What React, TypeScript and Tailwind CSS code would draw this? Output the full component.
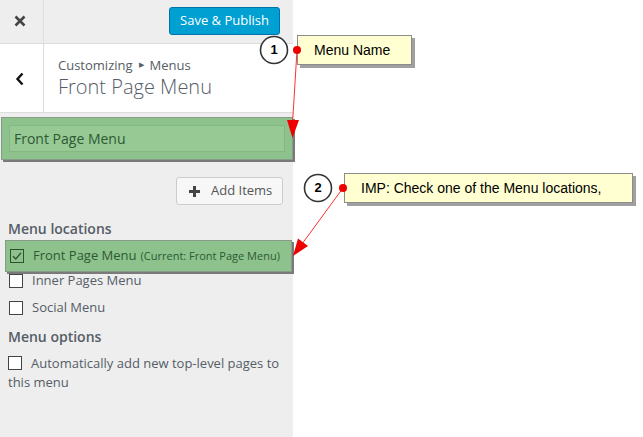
import React from "react";

function Check({ checked, green }: { checked?: boolean; green?: boolean }) {
  return (
    <span
      className={
        "flex h-[14px] w-[14px] shrink-0 items-center justify-center border " +
        (green ? "border-[#2f4f2f] bg-[#8ec28c]" : "border-[#444] bg-white")
      }
    >
      {checked && (
        <svg width="12" height="12" viewBox="0 0 12 12">
          <path d="M2 6.2 L4.8 9 L10 2.8" fill="none" stroke="#2f5a30" strokeWidth="1.4" />
        </svg>
      )}
    </span>
  );
}

export default function App() {
  return (
    <div
      className="relative flex h-[437px] w-[643px] overflow-hidden bg-white"
      style={{ fontFamily: '"Open Sans", "Liberation Sans", sans-serif' }}
    >
      <div className="flex h-full w-[293px] flex-col bg-[#eeeeee]">
        {/* top bar */}
        <div className="flex h-[44px] border-b border-[#dddddd]">
          <div className="flex w-[44px] items-center justify-center border-r border-[#dddddd]">
            <svg width="12" height="12" viewBox="0 0 12 12" className="-ml-[3px] -mt-[1px]">
              <path d="M1.5 1.5 L10.5 10.5 M10.5 1.5 L1.5 10.5" stroke="#444" strokeWidth="2.6" />
            </svg>
          </div>
          <div className="flex flex-1 justify-end pr-[13px] pt-[7px]">
            <button className="h-[28px] w-[111px] rounded-[3px] border border-[#0073aa] bg-[#00a0d2] text-[13px] text-white">
              Save &amp; Publish
            </button>
          </div>
        </div>
        {/* header */}
        <div className="flex h-[69px] border-b border-[#dddddd] bg-white">
          <div className="flex w-[44px] items-center justify-center border-r border-[#dddddd]">
            <svg width="10" height="14" viewBox="0 0 10 14" className="-ml-[3px] mt-[2px]">
              <path d="M7.5 1.5 L2.5 7 L7.5 12.5" fill="none" stroke="#111" strokeWidth="2.4" />
            </svg>
          </div>
          <div className="flex flex-col pl-[14px] pt-[12px]">
            <div className="flex items-center text-[13px] leading-[18px] text-[#555d66]">
              Customizing
              <span className="mx-[6px] text-[7px]">▶</span>
              Menus
            </div>
            <div className="text-[20px] font-light leading-[26px] text-[#555d66]">Front Page Menu</div>
          </div>
        </div>
        {/* menu name highlighted */}
        <div className="ml-[1px] mt-[4px] flex h-[43px] w-[292px] items-center border border-[#8a9a8a] bg-[#8ec28c] px-[7px] shadow-[2px_2px_0_#7a7a7a]">
          <div className="flex h-[27px] w-full items-center border border-[#84b882] bg-[#97c995] pl-[4px] text-[14px] text-[#2c5a32]">
            Front Page Menu
          </div>
        </div>
        {/* add items */}
        <div className="mt-[17px] flex justify-end pr-[10px]">
          <button className="flex h-[28px] w-[107px] items-center rounded-[3px] border border-[#cccccc] bg-[#f7f7f7] pl-[12px] text-[13px] text-[#555]">
            <svg width="11" height="11" viewBox="0 0 11 11" className="mr-[11px]">
              <path d="M5.5 0 V11 M0 5.5 H11" stroke="#444" strokeWidth="3" />
            </svg>
            Add Items
          </button>
        </div>
        {/* menu locations */}
        <div className="mt-[14px] pl-[8px] text-[14px] font-semibold leading-[20px] text-[#555d66]">Menu locations</div>
        <div className="ml-[5px] mt-[1px] flex h-[32px] w-[287px] items-center border border-[#8a9a8a] bg-[#8ec28c] pl-[4px] shadow-[2px_2px_0_#7a7a7a]">
          <Check checked green />
          <span className="ml-[9px] text-[13px] text-[#2c5a32]">Front Page Menu</span>
          <span className="ml-[4px] text-[11px] text-[#2c5a32]">(Current: Front Page Menu)</span>
        </div>
        <div className="-mt-[3px] flex h-[24px] items-center pl-[9px] text-[13px] text-[#555d66]">
          <Check />
          <span className="ml-[9px]">Inner Pages Menu</span>
        </div>
        <div className="mt-[3px] flex h-[24px] items-center pl-[9px] text-[13px] text-[#555d66]">
          <Check />
          <span className="ml-[9px]">Social Menu</span>
        </div>
        <div className="mt-[7px] pl-[8px] text-[14px] font-semibold leading-[20px] text-[#555d66]">Menu options</div>
        <div className="mt-[7px] pl-[8px] text-[13px] leading-[19px] text-[#555d66]">
          <span className="mr-[9px] inline-flex translate-y-[2px] align-baseline">
            <Check />
          </span>
          Automatically add new top-level pages to this menu
        </div>
      </div>

      {/* annotation overlays */}
      <svg className="pointer-events-none absolute left-0 top-0" width="643" height="437" viewBox="0 0 643 437">
        <line x1="297" y1="50" x2="292.5" y2="124" stroke="#ff3030" strokeWidth="1" />
        <polygon points="287,120 299,120 292.5,138" fill="#ee0000" />
        <line x1="343" y1="188" x2="302" y2="244" stroke="#ff3030" strokeWidth="1" />
        <polygon points="308,246 298,238.5 293,256" fill="#ee0000" />
        <circle cx="274" cy="50" r="13.5" fill="white" stroke="#333" strokeWidth="1.6" />
        <circle cx="318" cy="188" r="13.5" fill="white" stroke="#333" strokeWidth="1.6" />
      </svg>
      <div
        className="absolute left-[261px] top-[41px] flex h-[18px] w-[26px] items-center justify-center text-[13px] font-bold text-black"
        style={{ fontFamily: '"Liberation Sans", Arial, sans-serif' }}
      >
        1
      </div>
      <div
        className="absolute left-[305px] top-[179px] flex h-[18px] w-[26px] items-center justify-center text-[13px] font-bold text-black"
        style={{ fontFamily: '"Liberation Sans", Arial, sans-serif' }}
      >
        2
      </div>
      <div
        className="absolute left-[297px] top-[35px] flex h-[30px] w-[115px] items-center border border-[#8c8c8c] bg-[#ffffd2] pl-[16px] text-[14px] text-black shadow-[3px_3px_0_#a0a0a0]"
        style={{ fontFamily: '"Liberation Sans", Arial, sans-serif' }}
      >
        Menu Name
      </div>
      <div
        className="absolute left-[344px] top-[173px] flex h-[30px] w-[289px] items-center border border-[#8c8c8c] bg-[#ffffd2] pl-[16px] text-[14px] text-black shadow-[3px_3px_0_#a0a0a0]"
        style={{ fontFamily: '"Liberation Sans", Arial, sans-serif' }}
      >
        IMP: Check one of the Menu locations,
      </div>
      <svg className="pointer-events-none absolute left-0 top-0" width="643" height="437" viewBox="0 0 643 437">
        <circle cx="297" cy="50" r="4" fill="#ee0000" />
        <circle cx="343" cy="188" r="4" fill="#ee0000" />
      </svg>
    </div>
  );
}
